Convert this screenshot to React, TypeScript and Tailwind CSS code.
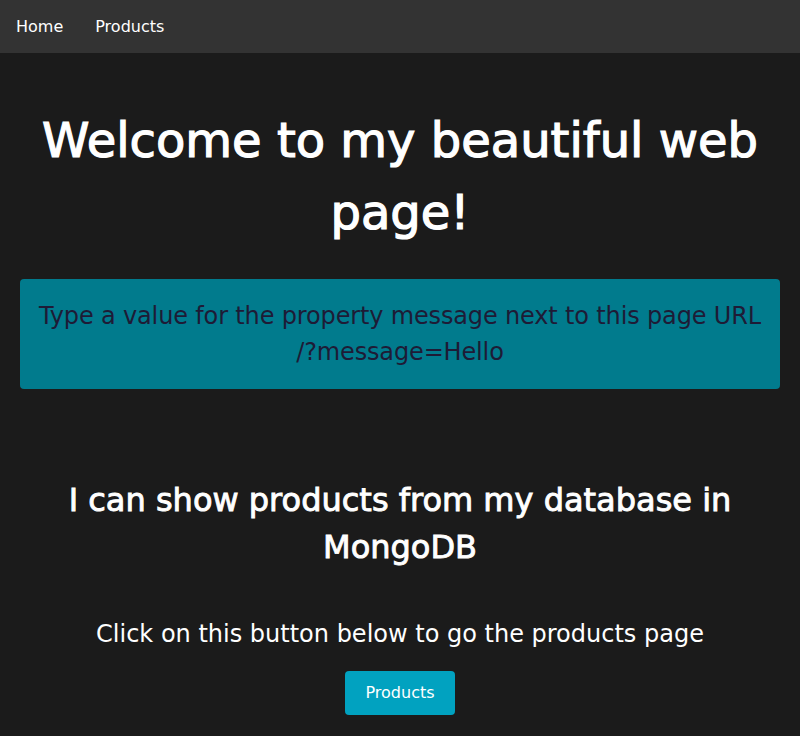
import React from "react";

export default function App() {
  return (
    <div className="min-h-[736px] bg-[#1b1b1b] font-['DejaVu_Sans',sans-serif] text-white">
      <nav className="flex h-[53px] items-center bg-[#333333] px-4 text-base">
        <a className="mr-8">Home</a>
        <a>Products</a>
      </nav>
      <main className="flex flex-col items-center px-5 text-center">
        <h1 className="mt-[51px] text-[48px] font-normal leading-[72px] [-webkit-text-stroke:1.2px_white]">
          Welcome to my beautiful web page!
        </h1>
        <div className="mt-[31px] w-full rounded bg-[#017b8d] px-4 py-[19px] text-[24px] leading-[36px] tracking-[-0.15px] text-[#1e1b36]">
          Type a value for the property message next to this page URL /?message=Hello
        </div>
        <h2 className="mt-[88px] text-[32px] font-normal leading-[47px] [-webkit-text-stroke:0.9px_white]">
          I can show products from my database in MongoDB
        </h2>
        <p className="mt-[45px] text-[24px] leading-[36px]">
          Click on this button below to go the products page
        </p>
        <button className="mt-[19px] h-[44px] w-[110px] rounded bg-[#01a2c0] text-base text-white">
          Products
        </button>
      </main>
    </div>
  );
}
